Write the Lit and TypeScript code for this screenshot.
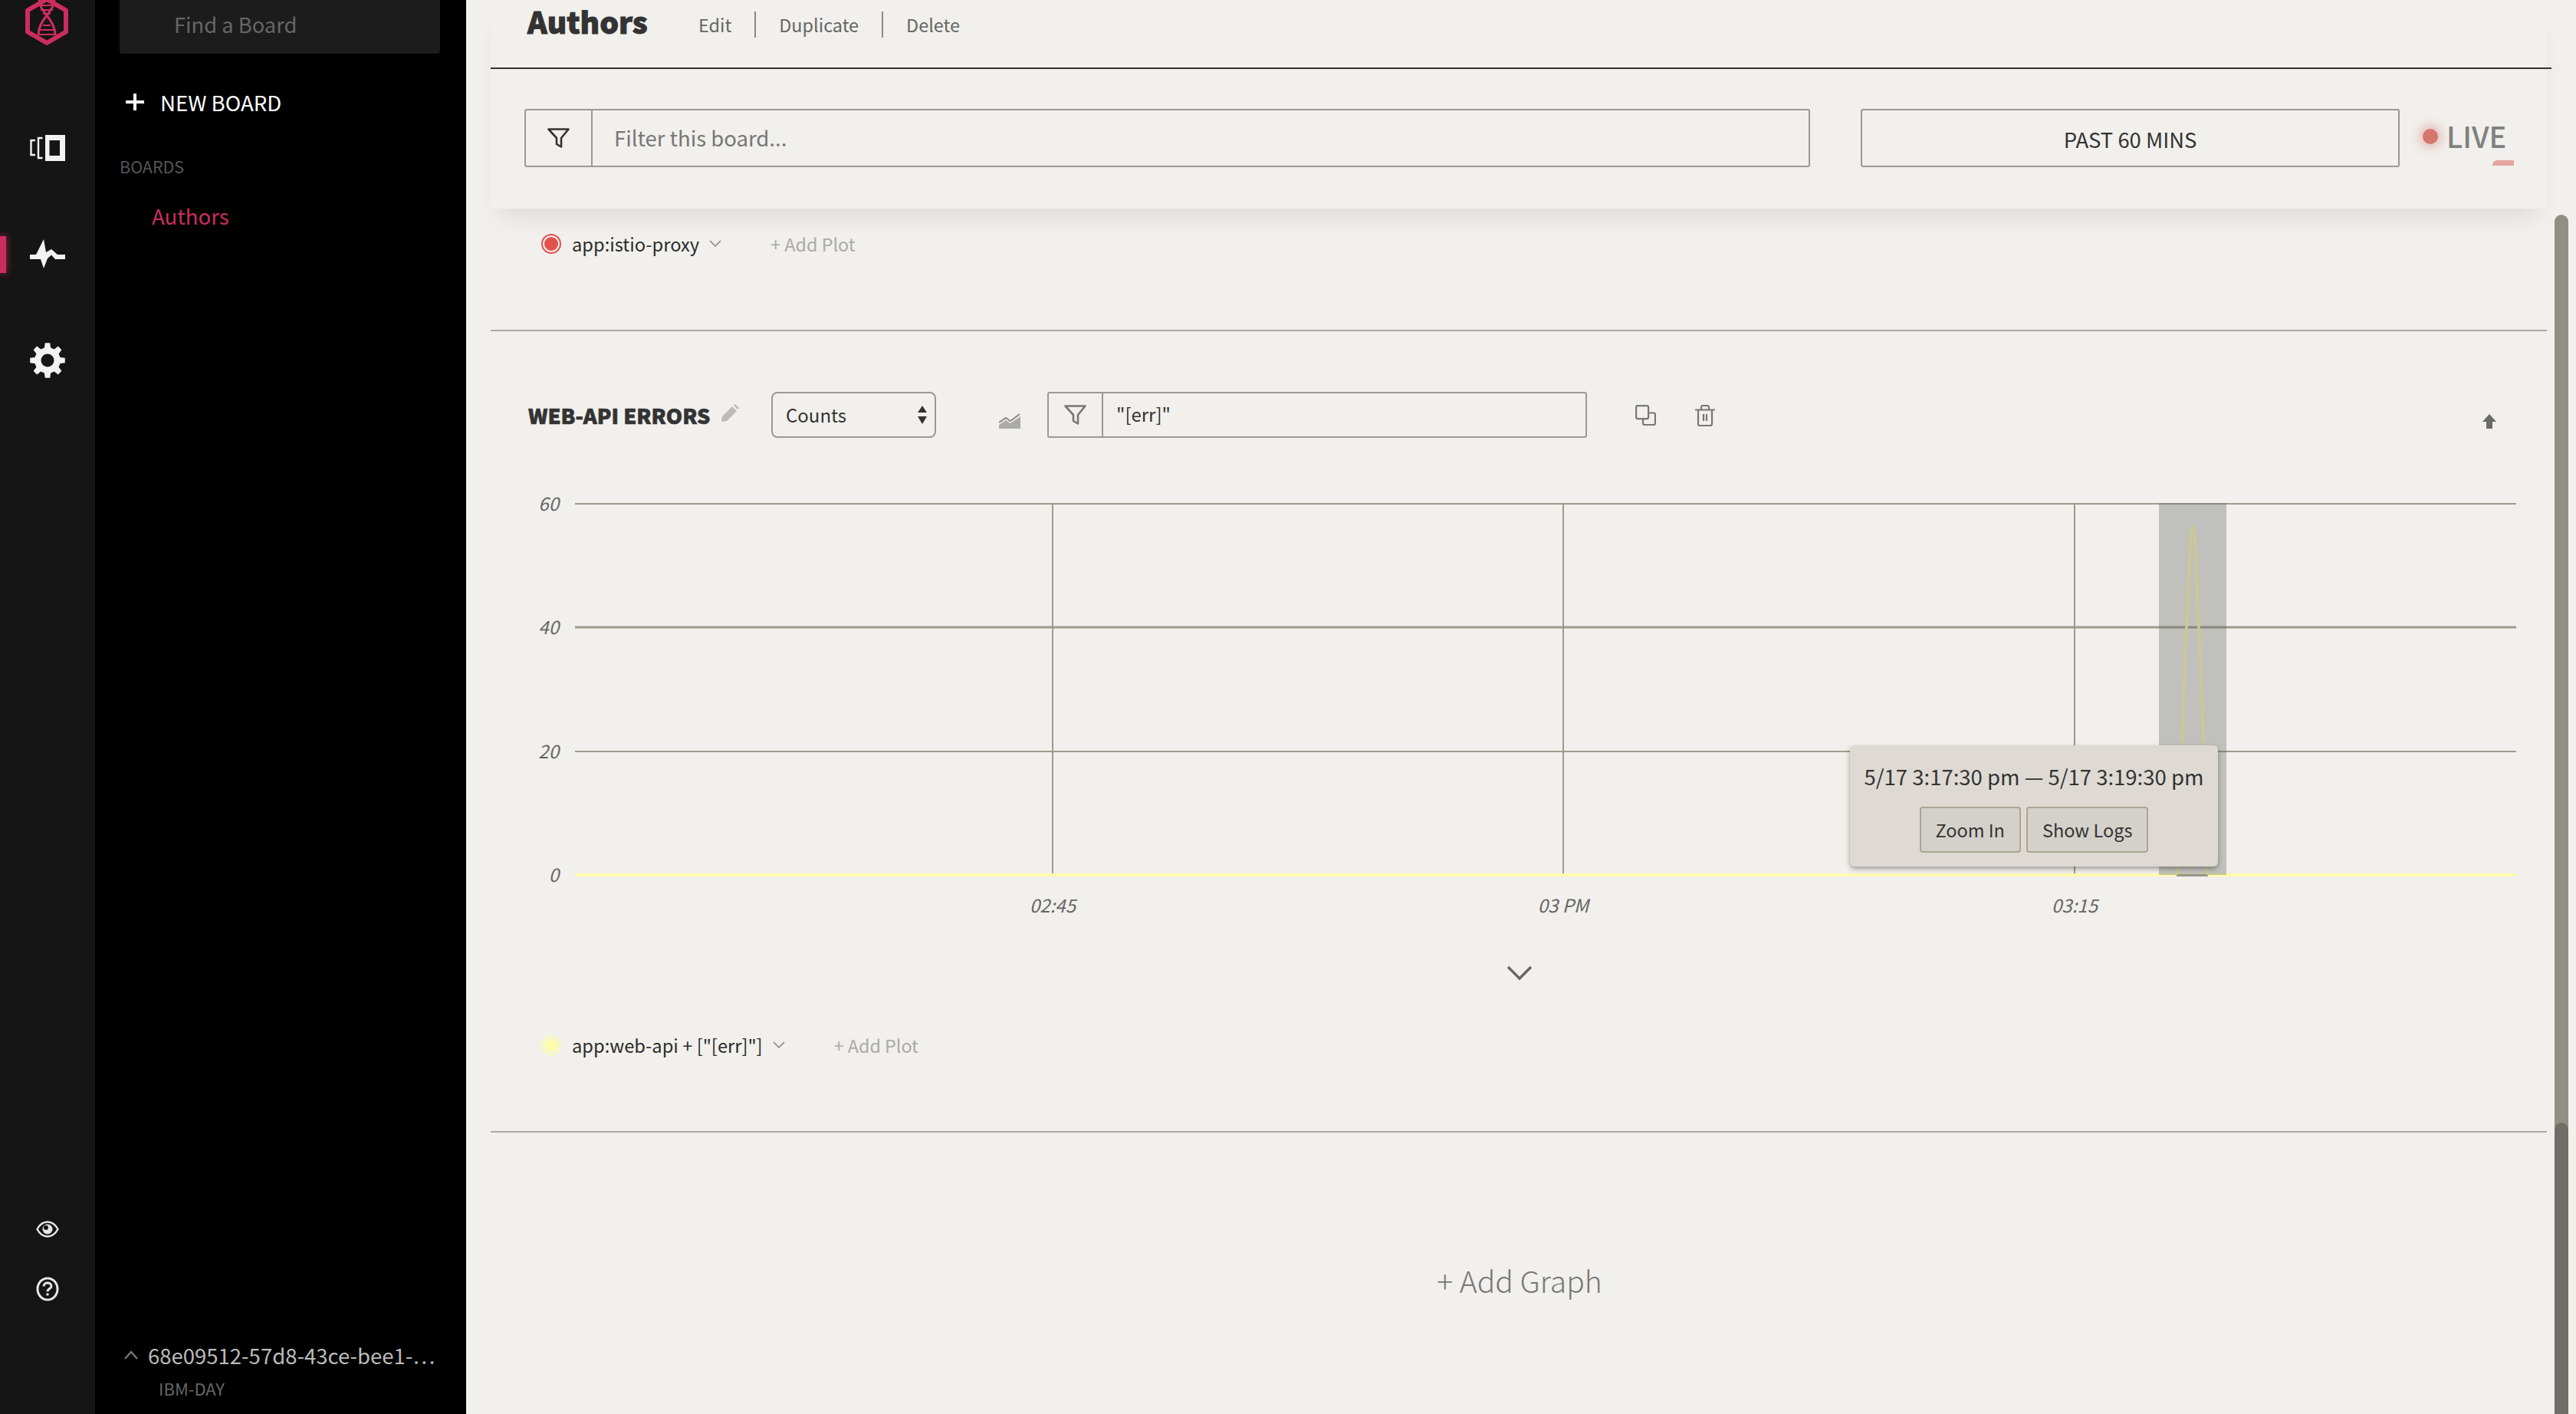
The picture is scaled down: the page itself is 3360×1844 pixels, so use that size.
import { LitElement, html, css, svg } from 'lit';
import { customElement } from 'lit/decorators.js';

const filterIcon = (color: string) => html`
  <svg width="29" height="26" viewBox="0 0 29 26" fill="none" stroke=${color} stroke-width="2.6" stroke-linejoin="round">
    <path d="M1.500 1.500h26L18 13v11.500l-6-3.500v-8z" />
  </svg>
`;

const caret = html`
  <svg class="caret" width="16" height="10" viewBox="0 0 16 10" fill="none" stroke="#999" stroke-width="1.8">
    <path d="M1 1l7 7 7-7" />
  </svg>
`;

// eight toothed gear, same outline the rail uses for settings
const gearPath = () => {
  const teeth = 8;
  const pts: string[] = [];
  for (let i = 0; i < teeth; i++) {
    const a = (i / teeth) * Math.PI * 2 - Math.PI / 2;
    const step = Math.PI / teeth;
    const corners = [
      [17, a - step * 0.62],
      [23, a - step * 0.36],
      [23, a + step * 0.36],
      [17, a + step * 0.62],
    ];
    for (const [r, t] of corners) {
      pts.push(`${(23 + r * Math.cos(t)).toFixed(2)} ${(23 + r * Math.sin(t)).toFixed(2)}`);
    }
  }
  return `M${pts.join('L')}Z M31.500 23a8.500 8.500 0 1 0 -17 0a8.500 8.500 0 1 0 17 0Z`;
};

@customElement('app-root')
export class AppRoot extends LitElement {
  static styles = css`
    :host {
      display: block;
      width: 3360px;
      height: 1844px;
      overflow: hidden;
      font-family: 'Noto Sans CJK SC', 'Noto Sans', sans-serif;
      color: #333;
      background: #f1f0ec;
    }
    .app {
      display: flex;
      height: 1844px;
    }

    /* icon rail */
    .rail {
      width: 124px;
      flex: none;
      background: #151515;
      display: flex;
      flex-direction: column;
      align-items: center;
      position: relative;
    }
    .logo {
      height: 59px;
      margin-bottom: 117px;
      margin-right: 2px;
      flex: none;
    }
    .rail-item {
      display: flex;
      align-items: center;
      justify-content: center;
      width: 46px;
    }
    .rail-item.panel {
      height: 34px;
      margin-bottom: 102px;
    }
    .rail-item.pulse {
      height: 38px;
      margin-bottom: 97px;
    }
    .rail-item.gear {
      height: 46px;
    }
    .active-bar {
      position: absolute;
      left: 0;
      top: 308px;
      width: 8px;
      height: 48px;
      background: #cc2d5f;
      box-shadow: 0 0 10px rgba(204, 45, 95, 0.8);
    }
    .rail-bottom {
      margin-top: auto;
      padding-bottom: 147px;
      display: flex;
      flex-direction: column;
      align-items: center;
      gap: 51px;
    }

    /* boards sidebar */
    .side {
      width: 484px;
      flex: none;
      background: #000;
      display: flex;
      flex-direction: column;
      box-sizing: border-box;
      padding: 0 34px 0 32px;
    }
    .search {
      height: 70px;
      background: #1c1c1c;
      border-radius: 0 0 4px 4px;
      color: #666;
      font-size: 27.300px;
      padding-left: 71px;
      line-height: 62px;
    }
    .new-board {
      display: flex;
      align-items: center;
      gap: 21px;
      margin: 43px 0 0 8px;
      height: 40px;
      color: #fff;
      font-size: 27.600px;
    }
    .side-label {
      margin-top: 49px;
      color: #555;
      font-size: 21.500px;
      line-height: 30px;
    }
    .side-link {
      margin: 30px 0 0 42px;
      color: #cc2d5f;
      font-size: 27.600px;
      line-height: 38px;
    }
    .cluster {
      margin-top: auto;
      padding: 0 0 18px 6px;
    }
    .cluster-name {
      display: flex;
      align-items: center;
      gap: 13px;
      color: #bbb;
      font-size: 27.500px;
      line-height: 40px;
      white-space: nowrap;
    }
    .cluster-sub {
      margin: 7px 0 0 45px;
      color: #666;
      font-size: 22px;
      line-height: 32px;
    }

    /* main column */
    .main {
      flex: 1;
      min-width: 0;
      position: relative;
      padding: 0 38px 0 32px;
    }
    .top {
      position: relative;
      z-index: 2;
      height: 272px;
      background: #f1f0ec;
      box-shadow: 0 22px 30px -12px rgba(0, 0, 0, 0.09);
    }
    .title-row {
      height: 88px;
      border-bottom: 2px solid #333;
      display: flex;
      padding-left: 48px;
      margin-right: -6px;
    }
    .title {
      font-size: 39px;
      font-weight: 900;
      -webkit-text-stroke: 1px #333;
      line-height: 54px;
      width: 223px;
      flex: none;
    }
    .links {
      display: flex;
      align-items: center;
      height: 30px;
      margin-top: 17px;
      color: #666;
      font-size: 23.400px;
    }
    .links span + span {
      border-left: 2px solid #888;
      margin-left: 30px;
      padding-left: 30px;
    }
    .filters {
      display: flex;
      margin-top: 52px;
      padding-left: 44px;
      height: 76px;
    }
    .filter {
      display: flex;
      box-sizing: border-box;
      border: 2px solid #999;
      border-radius: 3px;
    }
    .filter .icon {
      flex: none;
      display: flex;
      align-items: center;
      justify-content: center;
      border-right: 2px solid #999;
    }
    .board-filter {
      width: 1677px;
    }
    .board-filter .icon {
      width: 85px;
    }
    .board-filter .text {
      padding-left: 28px;
      font-size: 27.500px;
      line-height: 70px;
      color: #777;
    }
    .range {
      width: 703px;
      margin-left: 66px;
      box-sizing: border-box;
      border: 2px solid #999;
      border-radius: 3px;
      text-align: center;
      font-size: 27.400px;
      line-height: 74px;
    }
    .live {
      display: flex;
      position: relative;
      margin-left: 30px;
      align-items: center;
      gap: 11px;
      height: 68px;
      color: #808080;
      font-size: 38px;
      font-weight: 500;
    }
    .live i {
      width: 20px;
      height: 20px;
      border-radius: 50%;
      background: #d5766f;
      box-shadow: 0 0 12px 6px rgba(213, 118, 111, 0.35);
      margin-top: 4px;
    }
    .live b {
      position: absolute;
      right: -10px;
      top: 67px;
      width: 28px;
      height: 7px;
      background: #e5a5a0;
      border-radius: 6px 0 0 0;
    }
    .plot-row {
      display: flex;
      align-items: center;
      padding-left: 66px;
      height: 40px;
      font-size: 23.700px;
      color: #2b2b2b;
    }
    .dot {
      box-sizing: border-box;
      width: 26px;
      height: 26px;
      border-radius: 50%;
      border: 2px solid currentColor;
      padding: 2px;
      background-clip: content-box;
      margin-right: 14px;
    }
    .dot.red {
      color: #e2514a;
      background-color: #e2514a;
    }
    .dot.yellow {
      color: #fdfbae;
      background-color: #fdfbae;
    }
    .caret {
      margin-left: 13px;
    }
    .add-plot {
      margin-left: 64px;
      color: #aaa;
      font-size: 23.300px;
    }
    .plots-top {
      margin-top: 26px;
      padding-bottom: 92px;
      border-bottom: 2px solid #aaa9a2;
    }

    /* graph */
    .graph-head {
      display: flex;
      align-items: center;
      margin-top: 79px;
      height: 60px;
      padding-left: 49px;
      position: relative;
    }
    .graph-title {
      font-size: 27.200px;
      font-weight: 900;
      -webkit-text-stroke: 0.7px #333;
      width: 251px;
      flex: none;
      white-space: nowrap;
    }
    .pencil {
      flex: none;
      margin-top: -4px;
    }
    .select {
      box-sizing: border-box;
      width: 215px;
      height: 60px;
      border: 2px solid #999;
      border-radius: 8px;
      display: flex;
      align-items: center;
      justify-content: space-between;
      padding: 0 10px 0 17px;
      font-size: 24px;
      margin-left: 42px;
      margin-right: 82px;
      flex: none;
    }
    .select span {
      margin-top: -2px;
    }
    .trend {
      margin-right: 35px;
      margin-top: 16px;
      flex: none;
    }
    .graph-filter {
      width: 704px;
      height: 60px;
      flex: none;
    }
    .graph-filter .icon {
      width: 69px;
    }
    .graph-filter .text {
      padding-left: 17px;
      font-size: 24px;
      line-height: 54px;
    }
    .copy {
      margin-left: 63px;
      flex: none;
    }
    .trash {
      margin-left: 51px;
      margin-top: 2px;
      flex: none;
    }
    .up {
      position: absolute;
      left: 2598px;
      top: 29px;
    }
    .chart {
      position: relative;
      height: 600px;
      margin-top: 55px;
    }
    .chart svg {
      display: block;
    }
    .chart text {
      font-family: 'Noto Sans CJK SC', 'Noto Sans', sans-serif;
      font-size: 24px;
      font-style: italic;
      fill: #666;
    }
    .tooltip {
      position: absolute;
      left: 1773px;
      top: 346px;
      box-sizing: border-box;
      width: 480px;
      height: 158px;
      background: #dedad3;
      border-radius: 6px;
      box-shadow: 0 3px 6px rgba(0, 0, 0, 0.35);
      text-align: center;
      padding-top: 18px;
    }
    .tooltip .range-text {
      font-size: 27.500px;
      line-height: 44px;
      white-space: nowrap;
    }
    .tooltip .btns {
      display: flex;
      justify-content: center;
      gap: 7px;
      margin-top: 18px;
    }
    .tooltip .btn {
      box-sizing: border-box;
      height: 60px;
      border: 2px solid #aaa695;
      border-radius: 4px;
      background: #d4d1ca;
      padding: 0 19px;
      font-size: 23.500px;
      line-height: 56px;
    }
    .expand {
      display: flex;
      justify-content: center;
      margin-top: 33px;
      padding-left: 2px;
    }
    .plots-bottom {
      margin-top: 64px;
      padding-bottom: 92px;
      border-bottom: 2px solid #aaa9a2;
    }
    .add-graph {
      margin-top: 162px;
      padding-left: 2px;
      text-align: center;
      color: #777;
      font-size: 39px;
      font-weight: 300;
      line-height: 60px;
    }
    .scrollbar {
      position: absolute;
      left: 2724px;
      top: 280px;
      width: 18px;
      height: 1190px;
      border-radius: 9px 9px 0 0;
      background: #918f82;
    }
    .scrollbar.track {
      top: 1464px;
      height: 380px;
      background: #6f6e67;
    }
  `;

  private renderChart() {
    const ys = [657, 818, 980, 1141].map((y) => y - 626);
    const xs = [1373, 2039, 2706].map((x) => x - 640);
    const labels = ['02:45', '03 PM', '03:15'];
    const left = 750 - 640;
    const right = 3282 - 640;
    return svg`
      <svg width="2680" height="600" viewBox="0 0 2680 600">
        ${xs.map((x) => svg`<line x1=${x} x2=${x} y1=${ys[0]} y2=${ys[3]} stroke="#9c9c8d" stroke-width="2" />`)}
        ${ys.slice(0, 3).map(
          (y, i) => svg`<line x1=${left} x2=${right} y1=${y} y2=${y} stroke="#9c9c8d" stroke-width=${i === 1 ? 3 : 2} />`,
        )}
        ${['60', '40', '20', '0'].map(
          (t, i) => svg`<text x="89" y=${ys[i] + 9} text-anchor="end">${t}</text>`,
        )}
        ${xs.map((x, i) => svg`<text x=${x} y="564" text-anchor="middle">${labels[i]}</text>`)}
        <line x1=${left} x2=${right} y1=${ys[3]} y2=${ys[3]} stroke="#fdfbae" stroke-width="4" />
        <rect x="2176" y=${ys[0] - 1} width="88" height=${ys[3] - ys[0] + 1} fill="#5f5f5a" fill-opacity="0.33" />
        <rect x="2199" y=${ys[3] - 1} width="41" height="3" fill="#97968b" />
        <path
          d="M2199 515C2203 490 2205 420 2206 346C2208 280 2210 220 2212 192C2215 130 2217 61 2220 61C2223 61 2225 130 2228 192C2230 220 2232 280 2234 346C2235 420 2237 490 2240 515"
          fill="none"
          stroke="#cbca8f"
          stroke-width="3.500"
        />
      </svg>
    `;
  }

  render() {
    return html`
      <div class="app">
        <nav class="rail">
          <svg class="logo" width="58" height="59" viewBox="0 0 58 59">
            <path d="M29 -1L54 13.500V41.500L29 56L4 41.500V13.500Z" fill="none" stroke="#cc2d5f" stroke-width="6" stroke-linejoin="round" />
            <path d="M19 0C19 15 40 25 40 46M39 0C39 15 18 25 18 46" fill="none" stroke="#cc2d5f" stroke-width="3" />
            <path d="M20 7H38M21 13H37M24 18H34M24 33H34M20 39H38M19 45H39" stroke="#cc2d5f" stroke-width="2" />
          </svg>
          <div class="rail-item panel">
            <svg width="46" height="34" viewBox="0 0 46 34">
              <path fill="#f2f2f2" fill-rule="evenodd" d="M20 0H46V34H20ZM25.500 7V27H39V7Z" />
              <path fill="none" stroke="#f2f2f2" stroke-width="2.400" d="M7 7H1.500V26H7M16.500 4H11V30H16.500" />
            </svg>
          </div>
          <div class="rail-item pulse">
            <svg width="46" height="38" viewBox="0 0 46 38">
              <path fill="#f2f2f2" d="M0 20H8L18 0L21 17L28 13L36 20H46V26H33L28 20.500L23 25L18 38L14 26H0Z" />
            </svg>
          </div>
          <div class="rail-item gear">
            <svg width="46" height="46" viewBox="0 0 46 46">
              <path fill="#f2f2f2" fill-rule="evenodd" d=${gearPath()} />
            </svg>
          </div>
          <div class="active-bar"></div>
          <div class="rail-bottom">
            <svg width="30" height="22" viewBox="0 0 30 22">
              <path fill="none" stroke="#e6e6e6" stroke-width="2.400" d="M1.500 11C5 4.500 10 1.500 15 1.500S25 4.500 28.500 11C25 17.500 20 20.500 15 20.500S5 17.500 1.500 11Z" />
              <circle cx="15" cy="11" r="6.500" fill="#e6e6e6" />
              <circle cx="13" cy="9" r="3" fill="#151515" />
            </svg>
            <svg width="30" height="32" viewBox="0 0 30 32">
              <ellipse cx="15" cy="16" rx="13" ry="14" fill="none" stroke="#e6e6e6" stroke-width="3" />
              <path fill="none" stroke="#e6e6e6" stroke-width="3" d="M10 12.500c0-3 2.400-4.500 5-4.500s5 1.500 5 4.200c0 3.300-5 3.300-5 7" />
              <rect x="13.500" y="21.500" width="3" height="3" fill="#e6e6e6" />
            </svg>
          </div>
        </nav>

        <aside class="side">
          <div class="search">Find a Board</div>
          <div class="new-board">
            <svg width="24" height="22" viewBox="0 0 24 22"><path fill="#fff" d="M10 0h4v9h10v4H14v9h-4v-9H0V9h10z" /></svg>
            <span>NEW BOARD</span>
          </div>
          <div class="side-label">BOARDS</div>
          <div class="side-link">Authors</div>
          <div class="cluster">
            <div class="cluster-name">
              <svg width="18" height="12" viewBox="0 0 18 12" fill="none" stroke="#777" stroke-width="2.400"><path d="M1 11l8-9 8 9" /></svg>
              <span>68e09512-57d8-43ce-bee1-…</span>
            </div>
            <div class="cluster-sub">IBM-DAY</div>
          </div>
        </aside>

        <main class="main">
          <div class="top">
            <div class="title-row">
              <div class="title">Authors</div>
              <div class="links"><span>Edit</span><span>Duplicate</span><span>Delete</span></div>
            </div>
            <div class="filters">
              <div class="filter board-filter">
                <div class="icon">${filterIcon('#333')}</div>
                <div class="text">Filter this board...</div>
              </div>
              <div class="range">PAST 60 MINS</div>
              <div class="live"><i></i><span>LIVE</span><b></b></div>
            </div>
          </div>

          <div class="plot-row plots-top">
            <span class="dot red"></span>
            <span>app:istio-proxy</span>
            ${caret}
            <span class="add-plot">+ Add Plot</span>
          </div>

          <div class="graph-head">
            <div class="graph-title">WEB-API ERRORS</div>
            <svg class="pencil" width="24" height="24" viewBox="0 0 24 24"><path fill="#bbb" d="M1 23l1-7L15 3l6 6L8 22zM17 1l2-1 5 5-2 2z" /></svg>
            <div class="select">
              <span>Counts</span>
              <svg width="12" height="24" viewBox="0 0 12 24"><path fill="#333" d="M6 0l6 9H0zM0 14h12l-6 10z" /></svg>
            </div>
            <svg class="trend" width="28" height="20" viewBox="0 0 28 20">
              <path fill="none" stroke="#888" stroke-width="2" d="M0 12l9-6 6 4L27 1" />
              <path fill="#aaa" d="M0 15l9-6 6 4 13-9v16H0z" />
            </svg>
            <div class="filter graph-filter">
              <div class="icon">${filterIcon('#777')}</div>
              <div class="text">"[err]"</div>
            </div>
            <svg class="copy" width="27" height="27" viewBox="0 0 27 27" fill="none" stroke="#777" stroke-width="2.200">
              <rect x="1.100" y="1.100" width="16" height="17" rx="2" />
              <path d="M17.500 10.500H24a2 2 0 0 1 2 2V24a2 2 0 0 1-2 2H12a2 2 0 0 1-2-2v-5.500" />
            </svg>
            <svg class="trash" width="26" height="28" viewBox="0 0 26 28" fill="none" stroke="#777" stroke-width="2.200">
              <path d="M0 6.500h26M8 6V3a2 2 0 0 1 2-2h6a2 2 0 0 1 2 2v3M4 6.500V25a2 2 0 0 0 2 2h14a2 2 0 0 0 2-2V6.500M11 12v9M15 12v9" />
            </svg>
            <svg class="up" width="18" height="19" viewBox="0 0 18 19"><path fill="#6b6b6b" d="M9 0l9 10h-5v9H5v-9H0z" /></svg>
          </div>

          <div class="chart">
            ${this.renderChart()}
            <div class="tooltip">
              <div class="range-text">5/17 3:17:30 pm — 5/17 3:19:30 pm</div>
              <div class="btns">
                <div class="btn">Zoom In</div>
                <div class="btn">Show Logs</div>
              </div>
            </div>
          </div>

          <div class="expand">
            <svg width="34" height="20" viewBox="0 0 34 20" fill="none" stroke="#666" stroke-width="3.400"><path d="M2 2l15 15L32 2" /></svg>
          </div>

          <div class="plot-row plots-bottom">
            <span class="dot yellow"></span>
            <span>app:web-api + ["[err]"]</span>
            ${caret}
            <span class="add-plot">+ Add Plot</span>
          </div>

          <div class="add-graph">+ Add Graph</div>
          <div class="scrollbar"></div>
          <div class="scrollbar track"></div>
        </main>
      </div>
    `;
  }
}
